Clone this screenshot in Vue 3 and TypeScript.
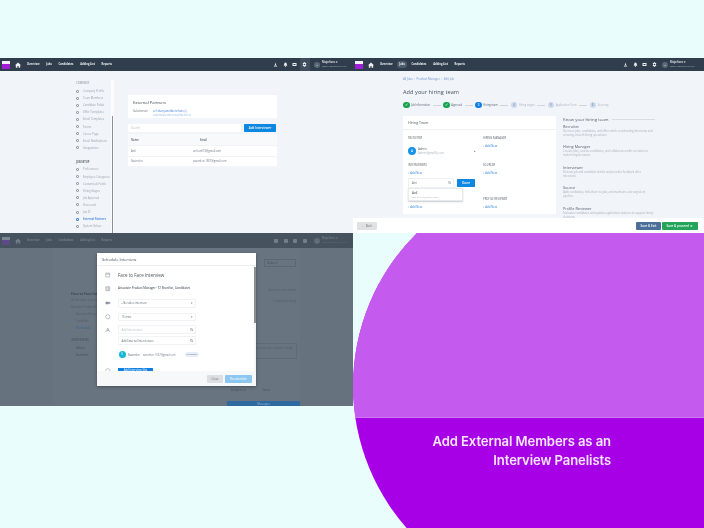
<script setup lang="ts">
const navItems: string[] = ['Overview', 'Jobs', 'Candidates', 'Adding List', 'Reports']
const companyItems: string[] = ['Company Profile', 'Team Members', 'Candidate Fields', 'Offer Templates', 'Email Templates', 'Forms', 'Career Page', 'Email Notifications', 'Integrations']
const jobItems: string[] = ['Preferences', 'Employee Categories', 'Custom Job Fields', 'Hiring Stages', 'Job Approval', 'Scorecard', 'Job ID', 'External Partners', 'System Values']
const steps = [
  { label: 'Job Information', state: 'done', mark: '✓' },
  { label: 'Approval', state: 'done', mark: '✓' },
  { label: 'Hiring team', state: 'active', mark: '3' },
  { label: 'Hiring stages', state: 'todo', mark: '4' },
  { label: 'Application Form', state: 'todo', mark: '5' },
  { label: 'Sourcing', state: 'todo', mark: '6' }
]
const roles = [
  { title: 'Recruiter', text: 'Oversees jobs, candidates, and offers while coordinating interviews and ensuring smooth hiring operations.' },
  { title: 'Hiring Manager', text: 'Creates jobs, reviews candidates, and collaborates with recruiters to make hiring decisions.' },
  { title: 'Interviewer', text: 'Reviews job and candidate details and provides feedback after interviews.' },
  { title: 'Source', text: 'Adds candidates, links them to jobs, and maintains a strong talent pipeline.' },
  { title: 'Profile Reviewer', text: 'Evaluates candidates and updates application statuses to support timely decisions.' }
]
</script>

<template>
  <div class="page">
    <div class="circle"></div>
    <div class="column leftCol">
      <!-- External partners -->
      <section class="shot shotTop">
        <header class="nav">
          <span class="logo"><i></i></span>
          <svg class="home" viewBox="0 0 10 10"><path d="M5 1 L10 5.4 H8.6 V9.4 H6 V6.6 H4 V9.4 H1.4 V5.4 H0 Z" fill="currentColor" /></svg>
          <span v-for="n in navItems" :key="n" class="navLink">{{ n }}</span>
          <span class="navRight">
            <svg class="ni" viewBox="0 0 10 10"><path d="M5 1 L6.4 6 H3.6 Z M1.5 9 L2.5 6.8 H7.5 L8.5 9 Z" fill="currentColor" /></svg>
            <svg class="ni" viewBox="0 0 10 10"><path d="M5 1 C7 1 7.6 3 7.6 5 L8.6 7.6 H1.4 L2.4 5 C2.4 3 3 1 5 1 Z M4 8.2 H6 V9.4 H4 Z" fill="currentColor" /></svg>
            <svg class="ni" viewBox="0 0 10 10"><path d="M1 2 H9 V8 H1 Z M3 4 V6 H7 V4 Z" fill="currentColor" fill-rule="evenodd" /></svg>
            <span class="gear on"><svg class="ni" viewBox="0 0 10 10"><path d="M4 0.5 H6 L6.3 2 L7.8 1.4 L8.8 3 L7.6 4.1 V5.9 L8.8 7 L7.8 8.6 L6.3 8 L6 9.5 H4 L3.7 8 L2.2 8.6 L1.2 7 L2.4 5.9 V4.1 L1.2 3 L2.2 1.4 L3.7 2 Z M5 3.6 A1.4 1.4 0 1 0 5 6.4 A1.4 1.4 0 1 0 5 3.6 Z" fill="currentColor" fill-rule="evenodd" /></svg></span>
            <span class="user">
              <span class="ava">M</span>
              <span class="userText"><b>Majorlions ▾</b><small>Quality Software Pvt Ltd</small></span>
            </span>
          </span>
        </header>
        <div class="settings">
          <aside class="sidebar">
            <div class="sideList">
              <div class="sideHead first">COMPANY</div>
              <div v-for="s in companyItems" :key="s" class="sideItem"><i></i>{{ s }}</div>
              <div class="sideHead second">JOB SETUP</div>
              <div v-for="s in jobItems" :key="s" class="sideItem" :class="{ current: s === 'External Partners' }"><i></i>{{ s }}</div>
            </div>
            <div class="sideTrack"><span></span></div>
          </aside>
          <main class="partners">
            <div class="pCard">
              <h3>External Partners</h3>
              <div class="subRow"><span>Subdomain</span><a>ec1xkanj.workbenchats ⓘ</a></div>
              <div class="clipLink">external.partners.workbench.io</div>
            </div>
            <div class="searchRow">
              <div class="search">Search</div>
              <button class="addBtn">Add Interviewer</button>
            </div>
            <div class="table">
              <div class="tr th"><span>Name</span><span class="emailHead">Email</span></div>
              <div class="tr"><span>Anil</span><span>anil.anil13@gmail.com</span></div>
              <div class="tr"><span>Swarnlen</span><span>swarnlen.1567@gmail.com</span></div>
            </div>
          </main>
        </div>
      </section>

      <!-- Schedule interview -->
      <section class="shot shotDim">
        <header class="nav navDim">
          <span class="logo logoDim"><i></i></span>
          <svg class="home" viewBox="0 0 10 10"><path d="M5 1 L10 5.4 H8.6 V9.4 H6 V6.6 H4 V9.4 H1.4 V5.4 H0 Z" fill="currentColor" /></svg>
          <span v-for="n in navItems" :key="n" class="navLink">{{ n }}</span>
          <span class="navRight">
            <span class="dot"></span><span class="dot"></span><span class="dot"></span><span class="dot gapDot"></span>
            <span class="user"><span class="ava">M</span><span class="userText"><b>Majorlions ▾</b><small>Quality Software Pvt Ltd</small></span></span>
          </span>
        </header>
        <div class="backdrop">
          <div class="backLeft">
            <div class="backTitle"><b>Face to Face Interview</b></div>
            <div class="backLine">30 min video interview scheduled</div>
            <div class="backLine">Associate Product Manager</div>
            <div class="backLine indent">Associate Manager</div>
            <div class="backLine indent">Candidate</div>
            <div class="backLink indent">Reschedule</div>
            <div class="backHead">INTERVIEWERS</div>
            <div class="backLine indent"><b>Admin</b></div>
            <div class="backLine indent"><b>Swarnlen</b></div>
          </div>
          <div class="backRight">
            <div class="backSelect">Status ▾</div>
            <div class="backLine far">Interview notes added</div>
            <div class="backLine far">Feedback pending</div>
            <div class="backNote">Add notes for the panel and share with the hiring team</div>
            <div class="backMeta"><span>Assigned on</span><span>Status</span></div>
            <div class="backBtn">Messages</div>
          </div>
        </div>
        <div class="modal">
          <div class="modalHead">Schedule Interview</div>
          <div class="modalBody">
            <div class="modalForm">
              <div class="mRow titleRow"><svg class="mi" viewBox="0 0 10 10"><path d="M1.5 2 H8.5 V9 H1.5 Z M1.5 4 H8.5" fill="none" stroke="currentColor" /></svg><h4>Face to Face Interview</h4></div>
              <div class="mRow jobRow"><svg class="mi" viewBox="0 0 10 10"><path d="M1.5 1.5 H8.5 V8.5 H1.5 Z M3.5 1.5 V8.5 M6.5 1.5 V8.5" fill="none" stroke="currentColor" /></svg><b>Associate Product Manager · 12 Shortlist, Candidates</b></div>
              <div class="mRow m7"><svg class="mi" viewBox="0 0 10 10"><path d="M1 3 H7 V7.5 H1 Z M7 4.5 L9.5 3 V7.5 L7 6 Z" fill="currentColor" /></svg><div class="field"><span>▪ No video interview</span><em>▾</em></div></div>
              <div class="mRow m5"><svg class="mi" viewBox="0 0 10 10"><circle cx="5" cy="5" r="3.8" fill="none" stroke="currentColor" /></svg><div class="field short"><span>15 mins</span><em>▾</em></div></div>
              <div class="mRow m4"><svg class="mi" viewBox="0 0 10 10"><path d="M5 2 L6.5 5.5 H3.5 Z M1 9 L2.5 6.5 H7.5 L9 9" fill="none" stroke="currentColor" /></svg><div class="field"><span class="ph">Add Interviewers</span><svg class="search" viewBox="0 0 10 10"><circle cx="4" cy="4" r="3" fill="none" stroke="#66707c" stroke-width="1.4" /><path d="M6.2 6.2 L9.2 9.2" stroke="#66707c" stroke-width="1.6" /></svg></div></div>
              <div class="mRow m2"><span class="mi"></span><div class="field"><span>Add External Interviewers</span><svg class="search" viewBox="0 0 10 10"><circle cx="4" cy="4" r="3" fill="none" stroke="#66707c" stroke-width="1.4" /><path d="M6.2 6.2 L9.2 9.2" stroke="#66707c" stroke-width="1.6" /></svg></div></div>
              <div class="mRow m6"><span class="mi"></span><div class="chip"><span class="chipAva">S</span><span class="chipName">Swarnlen</span><span class="chipMail">swarnlen.1567@gmail.com</span><span class="pill">External</span></div></div>
              <div class="mRow m10"><svg class="mi" viewBox="0 0 10 10"><circle cx="5" cy="5" r="3.8" fill="none" stroke="currentColor" /></svg><div class="slotBtn">Add Interview Slot</div></div>
            </div>
            <div class="mScroll"><span></span></div>
          </div>
          <div class="modalFoot">
            <button class="closeBtn">Close</button>
            <button class="reBtn">Re-schedule</button>
          </div>
        </div>
      </section>
    </div>

    <div class="column rightCol">
      <!-- Hiring team -->
      <section class="shot shotTop shotTeam">
        <header class="nav">
          <span class="logo"><i></i></span>
          <svg class="home" viewBox="0 0 10 10"><path d="M5 1 L10 5.4 H8.6 V9.4 H6 V6.6 H4 V9.4 H1.4 V5.4 H0 Z" fill="currentColor" /></svg>
          <span v-for="n in navItems" :key="n" class="navLink" :class="{ pillNav: n === 'Jobs' }">{{ n }}</span>
          <span class="navRight tight">
            <svg class="ni" viewBox="0 0 10 10"><path d="M5 1 L6.4 6 H3.6 Z M1.5 9 L2.5 6.8 H7.5 L8.5 9 Z" fill="currentColor" /></svg>
            <svg class="ni" viewBox="0 0 10 10"><path d="M5 1 C7 1 7.6 3 7.6 5 L8.6 7.6 H1.4 L2.4 5 C2.4 3 3 1 5 1 Z M4 8.2 H6 V9.4 H4 Z" fill="currentColor" /></svg>
            <svg class="ni" viewBox="0 0 10 10"><path d="M1 2 H9 V8 H1 Z M3 4 V6 H7 V4 Z" fill="currentColor" fill-rule="evenodd" /></svg>
            <span class="gear"><svg class="ni" viewBox="0 0 10 10"><path d="M4 0.5 H6 L6.3 2 L7.8 1.4 L8.8 3 L7.6 4.1 V5.9 L8.8 7 L7.8 8.6 L6.3 8 L6 9.5 H4 L3.7 8 L2.2 8.6 L1.2 7 L2.4 5.9 V4.1 L1.2 3 L2.2 1.4 L3.7 2 Z M5 3.6 A1.4 1.4 0 1 0 5 6.4 A1.4 1.4 0 1 0 5 3.6 Z" fill="currentColor" fill-rule="evenodd" /></svg></span>
            <span class="user"><span class="ava">M</span><span class="userText"><b>Majorlions ▾</b><small>Quality Software Pvt Ltd</small></span></span>
          </span>
        </header>
        <div class="teamBody">
          <div class="crumbs">All Jobs &nbsp;›&nbsp; Product Manager &nbsp;›&nbsp; Edit Job</div>
          <h2>Add your hiring team</h2>
          <ol class="steps">
            <li v-for="s in steps" :key="s.label" :class="s.state"><span class="mark">{{ s.mark }}</span><span class="stepText">{{ s.label }}</span><span class="stepLine"></span></li>
          </ol>
          <div class="teamRow">
            <div class="teamCard">
              <div class="teamHead">Hiring Team</div>
              <div class="teamGrid">
                <div class="teamColA">
                  <div class="caps">RECRUITER</div>
                  <div class="person"><span class="pAva">A</span><span class="pText"><b>Admin</b><small>Admin@gmplify.com</small></span><em>▴</em></div>
                  <div class="caps c7">INTERVIEWERS</div>
                  <div class="addNew a4">+ Add New</div>
                  <div class="pickRow">
                    <div class="pick"><span>Ani</span><svg class="search" viewBox="0 0 10 10"><circle cx="4" cy="4" r="3" fill="none" stroke="#66707c" stroke-width="1.3" /><path d="M6.2 6.2 L9.2 9.2" stroke="#66707c" stroke-width="1.5" /></svg></div>
                    <button class="doneBtn">Done</button>
                  </div>
                  <div class="drop"><b>Anil</b><small>anil.anil13@gmail.com</small></div>
                  <div class="addNew a4">+ Add New</div>
                </div>
                <div class="teamColB">
                  <div class="caps">HIRING MANAGER</div>
                  <div class="addNew a4">+ Add New</div>
                  <div class="caps c15">SOURCER</div>
                  <div class="addNew a4">+ Add New</div>
                  <div class="caps c22">PROFILE REVIEWER</div>
                  <div class="addNew a4">+ Add New</div>
                </div>
              </div>
            </div>
            <div class="know">
              <div class="knowHead"><span>Know your hiring team</span><i></i></div>
              <div v-for="r in roles" :key="r.title" class="role"><h5>{{ r.title }}</h5><p>{{ r.text }}</p></div>
            </div>
          </div>
        </div>
        <footer class="teamFoot">
          <button class="backBtnF">← Back</button>
          <span class="footRight">
            <button class="saveExit">Save &amp; Exit</button>
            <button class="saveNext">Save &amp; proceed &nbsp;➔</button>
          </span>
        </footer>
      </section>
      <div class="wash"></div>
      <p class="caption">Add External Members as an<br />Interview Panelists</p>
    </div>
  </div>
</template>

<style>
html, body { margin: 0; padding: 0; }
</style>

<style scoped>
* { box-sizing: border-box; }
.page {
  position: relative;
  width: 704px;
  height: 528px;
  overflow: hidden;
  display: flex;
  align-items: flex-start;
  padding-top: 58px;
  background: #e9fdfd;
  font-family: "Open Sans", "Liberation Sans", sans-serif;
  color: #4d5966;
}
.circle {
  position: absolute;
  left: 353px;
  top: 171px;
  width: 430px;
  height: 430px;
  border-radius: 50%;
  background: #a800e6;
}
.column { display: flex; flex-direction: column; }
.leftCol { width: 353px; }
.rightCol { width: 351px; }
.shot { position: relative; overflow: hidden; background: #f1f4f9; filter: blur(0.3px); }
.shotTop { height: 175px; }
.shotDim { height: 173px; background: #67727f; }
button { border: 0; padding: 0; font-family: inherit; }
h2, h3, h4, h5, p, ol { margin: 0; padding: 0; }

/* top bar */
.nav { height: 13px; display: flex; align-items: center; padding-left: 2px; background: #2f3d4d; color: #eef1f4; }
.logo { width: 8px; height: 8px; background: #f3eefc; display: flex; align-items: flex-end; flex: none; }
.logo i { display: block; width: 100%; height: 5px; background: #a11ed8; }
.home { width: 6px; height: 6px; margin: 0 6.5px 0 4.5px; flex: none; }
.navLink { font-size: 2.65px; line-height: 5px; font-weight: 700; margin-right: 6.8px; white-space: nowrap; }
.pillNav { background: #4d5c6c; border-radius: 3px; padding: 1px 2.5px; margin: 0 4.3px 0 -2.5px; }
.navRight { margin-left: auto; display: flex; align-items: center; gap: 4.4px; padding-right: 3px; height: 100%; }
.navRight.tight { padding-right: 6px; }
.ni { width: 5px; height: 5px; display: block; }
.gear { display: flex; align-items: center; justify-content: center; height: 100%; width: 10px; margin: 0 -2px; }
.gear.on { background: #414e5d; }
.user { display: flex; align-items: center; gap: 2px; margin-left: 2px; }
.tight .user { margin-left: 0; }
.ava { width: 6px; height: 6px; border-radius: 50%; background: #5a6876; color: #e4e8ec; font-size: 2.5px; line-height: 6px; text-align: center; flex: none; }
.userText { display: flex; flex-direction: column; width: 28px; }
.userText b { font-size: 2.6px; line-height: 3.4px; font-weight: 600; white-space: nowrap; }
.userText small { font-size: 2.2px; line-height: 3px; color: #a9b3bd; white-space: nowrap; }

/* settings shot */
.settings { height: 162px; display: flex; }
.sidebar { margin-left: 75px; width: 39px; flex: none; display: flex; padding-top: 10px; }
.sideList { width: 36px; flex: none; }
.sideHead { font-size: 2.6px; line-height: 4px; font-weight: 700; color: #5f6a75; padding-left: 1px; margin-bottom: 2.5px; }
.sideHead.first { color: #aab2bb; }
.sideHead.second { margin-top: 8.6px; margin-bottom: 2px; }
.sideItem { display: flex; align-items: center; height: 7.1px; font-size: 2.75px; color: #98a2ad; white-space: nowrap; }
.sideItem i { width: 3px; height: 3px; border: 0.8px solid #9aa3ad; border-radius: 1px; margin: 0 4px 0 1px; flex: none; }
.sideItem.current { color: #3b7dd8; font-weight: 600; }
.sideItem.current i { border-color: #3b7dd8; }
.sideTrack { width: 3px; margin-top: -1px; background: #fbfcfd; display: flex; flex-direction: column; justify-content: flex-end; align-items: center; }
.sideTrack span { width: 1.5px; height: 117px; background: #8b8f94; }
.partners { margin: 24px 0 0 14px; width: 149px; flex: none; }
.pCard { height: 23px; background: #fff; padding: 3.5px 5px 0; overflow: hidden; border-radius: 1px; }
.pCard h3 { font-size: 4.1px; line-height: 7px; font-weight: 400; color: #3a4551; }
.subRow { display: flex; margin-top: 3.5px; font-size: 2.8px; line-height: 4px; color: #6f7a85; }
.subRow span { width: 20px; }
.subRow a { color: #3b7dd8; }
.clipLink { font-size: 2.6px; line-height: 3.5px; color: #97b7e6; margin: 0.5px 0 0 20px; }
.searchRow { display: flex; justify-content: space-between; margin-top: 6px; }
.search { width: 113px; height: 8px; background: #fff; font-size: 2.8px; line-height: 8px; color: #b5bcc4; padding-left: 3px; }
.addBtn { width: 32px; height: 8px; background: #0e87e0; color: #fff; font-size: 2.9px; font-weight: 600; border-radius: 1px; margin-right: 1px; }
.table { margin-top: 2px; background: #fff; border-radius: 1.5px; overflow: hidden; }
.tr { display: flex; height: 10.5px; align-items: center; padding-left: 3px; font-size: 2.7px; color: #6b7580; border-top: 0.5px solid #f0f2f5; }
.tr span:first-child { width: 62px; }
.th { height: 11px; background: #f8f9fb; font-weight: 600; color: #5a6570; border-top: 0; }
.emailHead { padding-left: 7px; }

/* team shot */
.teamBody { height: 147px; overflow: hidden; padding: 6px 0 0 50px; }
.crumbs { font-size: 2.9px; line-height: 4px; color: #6e95cf; }
.teamBody h2 { margin-top: 7px; font-size: 5.6px; line-height: 8px; font-weight: 400; color: #46525e; letter-spacing: 0.05px; }
.steps { display: flex; list-style: none; margin-top: 5.5px; height: 7px; }
.steps li { display: flex; align-items: center; font-size: 2.65px; color: #5b6672; white-space: nowrap; }
.mark { width: 6.5px; height: 6.5px; border-radius: 50%; background: #1aa34f; color: #fff; font-size: 3.6px; line-height: 6.5px; text-align: center; flex: none; margin-right: 1.5px; }
.steps .active .mark { background: #0e7fe0; }
.steps .todo .mark { background: #cdd9ec; color: #6f8fc2; }
.steps .todo { color: #aeb7c2; }
.stepLine { width: 8px; height: 0.5px; background: #cfd5dc; margin: 0 2.5px; }
.steps li:last-child .stepLine { display: none; }
.teamRow { display: flex; margin-top: 7.5px; }
.teamCard { width: 153px; height: 98px; background: #fff; flex: none; }
.teamHead { height: 14px; font-size: 3.6px; line-height: 14px; padding-left: 5px; color: #4a5560; border-bottom: 0.5px solid #eef0f3; }
.teamGrid { display: flex; padding-left: 5px; }
.teamColA { width: 75px; padding-top: 6px; }
.teamColB { padding-top: 6px; }
.caps { font-size: 2.75px; line-height: 4px; color: #5a6570; white-space: nowrap; }
.c7 { margin-top: 7px; }
.c15 { margin-top: 15px; }
.c22 { margin-top: 22px; }
.addNew { font-size: 2.8px; line-height: 4px; color: #2f84dc; }
.a4 { margin-top: 4px; }
.person { display: flex; align-items: center; height: 10px; margin-top: 6px; width: 68px; }
.pAva { width: 8px; height: 8px; border-radius: 50%; background: #1991e6; color: #fff; font-size: 3.2px; line-height: 8px; text-align: center; margin-right: 2px; flex: none; }
.pText { display: flex; flex-direction: column; flex: 1; }
.pText b { font-size: 2.9px; line-height: 4.5px; font-weight: 400; color: #555f6a; }
.pText small { font-size: 2.7px; line-height: 4px; color: #aab2bb; }
.person em { font-size: 3px; font-style: normal; color: #77818b; }
.pickRow { display: flex; margin-top: 3px; align-items: center; gap: 3px; }
.pick { width: 46px; height: 10px; border: 0.5px solid #eef0f3; display: flex; align-items: center; justify-content: space-between; padding: 0 2px 0 3px; font-size: 3px; color: #5b6570; }
.pick .search, .field .search { width: 3.4px; height: 3.4px; flex: none; background: none; padding: 0; }
.doneBtn { width: 18px; height: 8px; background: #0e87e0; color: #fff; font-size: 3.2px; font-weight: 600; border-radius: 0.5px; }
.drop { width: 55px; height: 13px; background: #fff; border: 0.5px solid #e7eaee; box-shadow: 0 0.5px 1.5px rgba(60, 70, 85, 0.28); border-radius: 1px; padding: 2px 3px; display: flex; flex-direction: column; }
.drop b { font-size: 2.9px; line-height: 4.5px; font-weight: 600; color: #5b6570; }
.drop small { font-size: 2.5px; line-height: 3.5px; color: #aeb5bd; }
.know { width: 92px; margin-left: 7px; flex: none; }
.knowHead { display: flex; align-items: center; height: 6px; margin-bottom: 1.5px; gap: 3px; }
.knowHead span { font-size: 4.3px; color: #515c67; white-space: nowrap; }
.knowHead i { flex: 1; height: 0.5px; background: #d8dde3; }
.role { margin-bottom: 7.5px; height: 13px; }
.role h5 { font-size: 3.8px; line-height: 5px; font-weight: 400; color: #56616c; white-space: nowrap; }
.role p { font-size: 2.7px; line-height: 4px; color: #a9b1ba; }
.teamFoot { height: 15px; background: #fff; display: flex; justify-content: space-between; align-items: center; padding: 0 6px 0 4px; }
.backBtnF { width: 20px; height: 8px; background: #dfe1e3; color: #6a7078; font-size: 2.9px; border-radius: 1px; }
.footRight { display: flex; gap: 1px; }
.saveExit { width: 25px; height: 8px; background: #4b6f9a; color: #fff; font-size: 3px; font-weight: 600; border-radius: 1px; }
.saveNext { width: 36px; height: 8px; background: #22a559; color: #fff; font-size: 3px; font-weight: 600; border-radius: 1px; white-space: nowrap; }

/* wash + caption */
.wash { height: 185px; background: #c45bee; mix-blend-mode: lighten; border-bottom: 1px solid #cc78f0; }
.caption { position: relative; margin: 14px 93px 0 0; text-align: right; color: #f7e6ff; font-size: 13.1px; line-height: 18.5px; font-weight: 600; font-family: Inter, "Open Sans", sans-serif; letter-spacing: -0.1px; filter: blur(0.2px); }

/* dim shot */
.navDim { height: 15px; background: #46535f; color: #717d89; }
.logoDim { background: #7c8796; }
.logoDim i { background: #5b4a85; }
.dot { width: 4px; height: 4px; border-radius: 1px; background: #737e89; margin-left: 1px; }
.gapDot { margin-right: 1px; }
.navDim .ava { background: #5f6b77; color: #808b96; }
.navDim .userText b { color: #747f8a; }
.navDim .userText small { color: #66717c; }
.backdrop { height: 158px; display: flex; margin-left: 53px; width: 247px; background: #697481; justify-content: space-between; padding-top: 43px; }
.backLeft { width: 100px; padding-left: 18px; }
.backTitle { font-size: 3.4px; line-height: 6px; color: #3f4954; }
.backLine { font-size: 2.7px; line-height: 7px; color: #525d68; white-space: nowrap; }
.indent { padding-left: 5px; }
.backLink { font-size: 2.7px; line-height: 6px; color: #35618f; }
.backHead { font-size: 2.6px; line-height: 5px; color: #464f5a; margin-top: 6.5px; margin-bottom: 2px; }
.backRight { width: 73px; margin-top: -32px; display: flex; flex-direction: column; }
.backSelect { width: 32px; height: 8px; align-self: flex-end; border: 0.5px solid #5c6775; font-size: 2.8px; line-height: 7px; padding-left: 2px; margin: 0 4px 20px 0; color: #46505c; }
.far { text-align: right; padding-right: 4px; margin-bottom: 4px; }
.backNote { border: 0.5px solid #5f6a77; font-size: 2.7px; line-height: 5px; padding: 2px 3px; margin: 34px 3px 0 0; color: #525d68; }
.backMeta { display: flex; justify-content: space-between; font-size: 2.7px; line-height: 5px; color: #4a545f; margin-top: 29px; padding: 0 30px 0 4px; }
.backBtn { margin-top: 7.5px; height: 7px; background: #2e6a9f; color: #8fb3d2; font-size: 2.8px; line-height: 7px; text-align: center; flex: none; }

/* modal */
.modal { position: absolute; left: 97px; top: 20px; width: 159px; height: 133px; background: #fff; display: flex; flex-direction: column; box-shadow: 0 1px 3px rgba(20, 30, 40, 0.45); }
.modalHead { height: 13px; line-height: 14px; font-size: 3.9px; padding-left: 5px; color: #47525d; border-bottom: 0.5px solid #eceef1; flex: none; }
.modalBody { flex: 1; min-height: 0; display: flex; justify-content: space-between; overflow: hidden; }
.modalForm { padding-top: 5.5px; width: 150px; }
.mRow { display: flex; align-items: center; }
.mi { width: 5.5px; height: 5.5px; color: #8b949e; margin: 0 7.5px 0 8px; flex: none; display: block; }
.titleRow h4 { font-size: 4.5px; line-height: 7px; font-weight: 400; color: #48535e; white-space: nowrap; }
.jobRow { margin-top: 7.5px; }
.jobRow b { font-size: 2.85px; line-height: 5px; font-weight: 600; color: #58636e; white-space: nowrap; }
.m7 { margin-top: 7px; }
.m5 { margin-top: 5px; }
.m4 { margin-top: 4px; }
.m2 { margin-top: 2px; }
.m6 { margin-top: 6px; }
.m10 { margin-top: 10px; align-items: flex-start; }
.field { width: 78px; height: 9px; border: 1px solid #f1f2f5; border-radius: 1px; display: flex; align-items: center; justify-content: space-between; padding: 0 2px 0 2.5px; font-size: 2.7px; color: #626c77; }
.field.short { height: 8.5px; }
.field em { font-style: normal; color: #7b8590; font-size: 3px; }
.ph { color: #b8bfc7; }
.chip { display: flex; align-items: center; height: 7px; margin-left: 0.5px; }
.chipAva { width: 7px; height: 7px; border-radius: 50%; background: #14b8d6; color: #fff; font-size: 3px; line-height: 7px; text-align: center; margin-right: 2.5px; }
.chipName { font-size: 2.7px; color: #56616c; width: 15px; }
.chipMail { font-size: 2.6px; color: #737d88; width: 42px; white-space: nowrap; }
.pill { font-size: 2.5px; line-height: 5px; background: #e8eef8; color: #55708f; padding: 0 2px; border-radius: 2.5px; }
.slotBtn { width: 35px; height: 4px; background: #0e7fe0; color: #cfe6fa; font-size: 2.7px; font-weight: 600; white-space: nowrap; line-height: 4px; text-align: center; border-radius: 0.5px 0.5px 0 0; }
.mScroll { width: 2.5px; background: #f4f5f6; flex: none; padding-top: 1px; }
.mScroll span { display: block; height: 56px; background: #8b8f94; }
.modalFoot { height: 15px; background: #f7f8f9; display: flex; justify-content: flex-end; align-items: center; gap: 2px; padding-right: 4px; flex: none; }
.closeBtn { width: 16px; height: 8px; background: #dcdee0; color: #6b7178; font-size: 2.9px; border-radius: 1px; }
.reBtn { width: 27px; height: 8px; background: #8dc6f0; color: #e9f5fd; font-size: 2.9px; font-weight: 600; border-radius: 1px; white-space: nowrap; }
</style>
